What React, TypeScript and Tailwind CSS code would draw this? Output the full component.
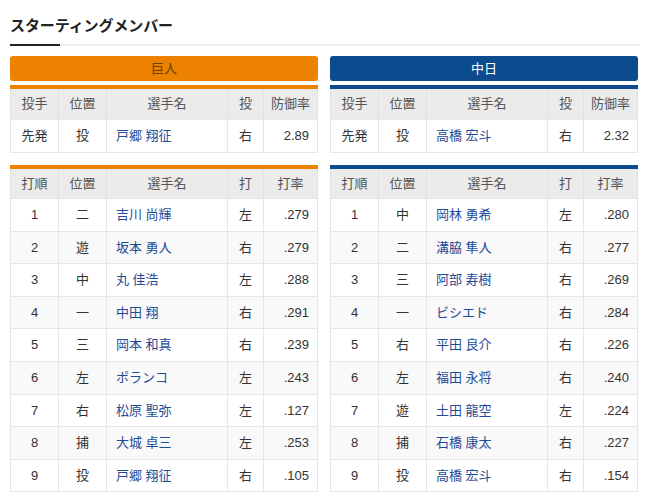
import React from 'react';

type Row = [string, string, string, string, string];

const giantsPitcher: Row[] = [['先発', '投', '戸郷 翔征', '右', '2.89']];
const dragonsPitcher: Row[] = [['先発', '投', '高橋 宏斗', '右', '2.32']];

const giantsLineup: Row[] = [
  ['1', '二', '吉川 尚輝', '左', '.279'],
  ['2', '遊', '坂本 勇人', '右', '.279'],
  ['3', '中', '丸 佳浩', '左', '.288'],
  ['4', '一', '中田 翔', '右', '.291'],
  ['5', '三', '岡本 和真', '右', '.239'],
  ['6', '左', 'ポランコ', '左', '.243'],
  ['7', '右', '松原 聖弥', '左', '.127'],
  ['8', '捕', '大城 卓三', '左', '.253'],
  ['9', '投', '戸郷 翔征', '右', '.105'],
];

const dragonsLineup: Row[] = [
  ['1', '中', '岡林 勇希', '左', '.280'],
  ['2', '二', '溝脇 隼人', '右', '.277'],
  ['3', '三', '阿部 寿樹', '右', '.269'],
  ['4', '一', 'ビシエド', '右', '.284'],
  ['5', '右', '平田 良介', '右', '.226'],
  ['6', '左', '福田 永将', '右', '.240'],
  ['7', '遊', '土田 龍空', '左', '.224'],
  ['8', '捕', '石橋 康太', '右', '.227'],
  ['9', '投', '高橋 宏斗', '右', '.154'],
];

const StatTable: React.FC<{ head: Row; rows: Row[]; accent: string; striped?: boolean; rowH: string }> = ({
  head,
  rows,
  accent,
  striped,
  rowH,
}) => (
  <table className={`w-full border-collapse border-t-4 ${accent} text-[13px] text-[#333]`}>
    <colgroup>
      <col className="w-[48px]" />
      <col className="w-[48px]" />
      <col />
      <col className="w-[36px]" />
      <col className="w-[54px]" />
    </colgroup>
    <thead>
      <tr className="h-[32px] bg-[#ebebeb] text-[#555]">
        {head.map((h, i) => (
          <th key={i} className="font-normal text-center border-x border-[#e2e2e2]">
            {h}
          </th>
        ))}
      </tr>
    </thead>
    <tbody>
      {rows.map((r, i) => (
        <tr key={i} className={`${rowH} ${striped && i % 2 === 1 ? 'bg-[#f9f9f9]' : 'bg-white'}`}>
          <td className="text-center border border-[#e6e6e6]">{r[0]}</td>
          <td className="text-center border border-[#e6e6e6]">{r[1]}</td>
          <td className="pl-[9px] text-left text-[#1f4b97] border border-[#e6e6e6]">{r[2]}</td>
          <td className="text-center border border-[#e6e6e6]">{r[3]}</td>
          <td className="pr-[8px] text-right border border-[#e6e6e6]">{r[4]}</td>
        </tr>
      ))}
    </tbody>
  </table>
);

const TeamColumn: React.FC<{
  name: string;
  headerCls: string;
  accent: string;
  pitcher: Row[];
  lineup: Row[];
}> = ({ name, headerCls, accent, pitcher, lineup }) => (
  <div className="flex flex-col">
    <div className={`h-[25px] rounded-[3px] flex items-center justify-center text-[13px] ${headerCls}`}>{name}</div>
    <div className="mt-[4px]">
      <StatTable head={['投手', '位置', '選手名', '投', '防御率']} rows={pitcher} accent={accent} rowH="h-[33px]" />
    </div>
    <div className="mt-[12px]">
      <StatTable
        head={['打順', '位置', '選手名', '打', '打率']}
        rows={lineup}
        accent={accent}
        striped
        rowH="h-[32.6px]"
      />
    </div>
  </div>
);

export default function App() {
  return (
    <div
      className="w-[650px] h-[503px] bg-white px-[10px] pt-[15px]"
      style={{ fontFamily: '"Liberation Sans", "Noto Sans CJK JP", sans-serif' }}
    >
      <h2 className="text-[15px] font-bold text-[#222] leading-[22px] tracking-[-0.1px]">スターティングメンバー</h2>
      <div className="relative mt-[7px] h-[2px] w-[630px] bg-[#eeeeee]">
        <div className="absolute left-0 top-0 h-[2px] w-[50px] bg-[#222]" />
      </div>
      <div className="mt-[10px] grid grid-cols-[308px_308px] gap-x-[12px]">
        <TeamColumn
          name="巨人"
          headerCls="bg-[#ed8200] text-[#6e3f05]"
          accent="border-t-[#ed8200]"
          pitcher={giantsPitcher}
          lineup={giantsLineup}
        />
        <TeamColumn
          name="中日"
          headerCls="bg-[#0d4b8f] text-white"
          accent="border-t-[#0d4b8f]"
          pitcher={dragonsPitcher}
          lineup={dragonsLineup}
        />
      </div>
    </div>
  );
}
